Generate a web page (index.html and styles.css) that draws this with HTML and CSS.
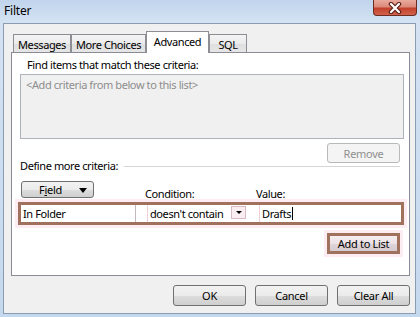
FILE: index.html
```html
<!DOCTYPE html>
<html lang="en">
<head>
    <meta charset="utf-8" />
    <title>Filter</title>
    <link rel="stylesheet" href="styles.css">
</head>
<body>
<div class="window">
    <div class="titlebar">
        <span class="title">Filter</span>
        <div class="close">
            <svg width="16" height="12" viewBox="0 0 16 12">
                <path d="M4 2 L12 10 M12 2 L4 10" stroke="#5b2119" stroke-width="4.5" stroke-linecap="round"/>
                <path d="M4 2 L12 10 M12 2 L4 10" stroke="#fff" stroke-width="2.2" stroke-linecap="round"/>
            </svg>
        </div>
    </div>

    <div class="client">
        <div class="tabs">
            <div class="tab tab-messages">Messages</div>
            <div class="tab tab-more">More Choices</div>
            <div class="tab tab-advanced active">Advanced</div>
            <div class="tab tab-sql">SQL</div>
        </div>

        <div class="panel">
            <div class="label">Find items that match these criteria:</div>
            <div class="criteria-list">&lt;Add criteria from below to this list&gt;</div>

            <div class="remove-row">
                <button class="btn btn-disabled">Remove</button>
            </div>

            <div class="section">
                <span>Define more criteria:</span>
                <span class="rule"></span>
            </div>

            <div class="headers">
                <button class="btn btn-field">F<span class="key">i</span>eld <span class="arrow"></span></button>
                <span class="cond-label">Condition:</span>
                <span class="value-label">Value:</span>
            </div>

            <!-- highlighted criteria row -->
            <div class="criteria-row">
                <div class="field-box">In Folder</div>
                <div class="cond-box">
                    <span class="cond-text">doesn't contain</span>
                    <span class="drop"><span class="drop-arrow"></span></span>
                </div>
                <div class="value-box">Drafts<span class="caret"></span></div>
            </div>

            <div class="add-row">
                <button class="btn btn-add">Add to List</button>
            </div>
        </div>

        <div class="footer">
            <button class="btn btn-footer">OK</button>
            <button class="btn btn-footer">Cancel</button>
            <button class="btn btn-footer">Clear All</button>
        </div>
    </div>
</div>
</body>
</html>
```

FILE: styles.css
```css
/* Window: aero-ish light blue frame */
body {
    margin: 0;
    width: 420px;
    height: 317px;
    overflow: hidden;
    font-family: "Noto Sans", "Liberation Sans", sans-serif;
    font-size: 11px;
    letter-spacing: -0.4px;
    color: #000;
}
.window {
    height: 317px;
    box-sizing: border-box;
    padding: 0 4px 3px 3px;
    display: flex;
    flex-direction: column;
    background: linear-gradient(180deg, #c0d4ec 0, #d4e2f3 22px, #c4d8ee 100%);
}
.titlebar {
    height: 23px;
    display: flex;
    justify-content: space-between;
    align-items: flex-start;
}
.title {
    padding: 2px 0 0 1px;
    font-size: 12px;
    letter-spacing: -0.2px;
}
.close {
    width: 44px;
    height: 16px;
    margin-right: -1px;
    box-sizing: border-box;
    border: 1px solid #6e2b22;
    border-top: none;
    border-radius: 0 0 4px 4px;
    background: linear-gradient(180deg, #e9aa9e 0, #dc8a7a 45%, #c4402c 55%, #d0634c 100%);
    display: flex;
    align-items: center;
    justify-content: center;
}
/* Client area */
.client {
    flex: 1;
    background: #f0f0f0;
    border: 1px solid #8a9bb2;
    padding: 7px 5px 0 7px;
    display: flex;
    flex-direction: column;
}
/* Tabs */
.tabs {
    display: flex;
    align-items: flex-end;
    height: 22px;
    padding-left: 2px;
    margin-bottom: -1px;
    position: relative;
    z-index: 1;
}
.tab {
    height: 18px;
    margin-bottom: 1px;
    box-sizing: border-box;
    border: 1px solid #8c8e94;
    border-bottom: none;
    background: linear-gradient(180deg, #f4f4f4 0, #ebebeb 50%, #dedede 51%, #e6e6e6 100%);
    display: flex;
    align-items: center;
    justify-content: center;
    padding-top: 2px;
}
.tab-messages { width: 58px; }
.tab-more { width: 75px; }
.tab-advanced { width: 63px; }
.tab-sql { width: 38px; }
.tab.active {
    height: 22px;
    margin-bottom: 0;
    background: #fff;
    padding-top: 0;
    padding-bottom: 2px;
}
/* Tab page */
.panel {
    height: 224px;
    box-sizing: border-box;
    background: #fff;
    border: 1px solid #898c95;
    padding: 0 5px 0 8px;
    display: flex;
    flex-direction: column;
}
.label {
    margin-top: 4px;
    padding-left: 7px;
    line-height: 15px;
}
.criteria-list {
    margin-top: 2px;
    height: 65px;
    box-sizing: border-box;
    background: #f0f0f0;
    border: 1px solid #aeb3bb;
    padding: 2px 5px;
    line-height: 15px;
    color: #8d8d8d;
}
.remove-row, .add-row {
    display: flex;
    justify-content: flex-end;
    padding-right: 4px;
}
.remove-row { margin-top: 4px; }
/* Buttons */
.btn {
    font-family: inherit;
    font-size: 11px;
    letter-spacing: -0.3px;
    color: #000;
    width: 73px;
    height: 20px;
    padding: 0;
    box-sizing: border-box;
    border: 1px solid #707070;
    border-radius: 3px;
    background: linear-gradient(180deg, #f2f2f2 0, #ebebeb 50%, #dddddd 51%, #cfcfcf 100%);
}
.btn-disabled {
    color: #8f8f8f;
    border-color: #b9b9b9;
    background: #f4f4f4;
}
.section {
    margin-top: -4px;
    display: flex;
    align-items: center;
    line-height: 14px;
}
.rule {
    flex: 1;
    margin: 1px 4px 0 6px;
    border-top: 1px solid #d5d5d5;
}
.headers {
    margin-top: 8px;
    display: flex;
    align-items: flex-end;
    padding-left: 1px;
}
.btn-field {
    height: 17px;
    display: flex;
    align-items: center;
    justify-content: center;
    position: relative;
    padding-right: 14px;
}
.key { text-decoration: underline; }
.arrow {
    position: absolute;
    right: 6px;
    top: 6px;
    border-left: 4px solid transparent;
    border-right: 4px solid transparent;
    border-top: 5px solid #000;
}
.cond-label {
    width: 111px;
    margin-left: 51px;
    margin-bottom: -3px;
}
.value-label {
    margin-bottom: -3px;
}
/* Highlighted criteria row */
.criteria-row {
    margin: 4px 0 0 -2px;
    height: 23px;
    box-sizing: border-box;
    border: 3px solid #a0715c;
    box-shadow: 0 0 0 3px #fdecf1;
    background: #fff;
    display: flex;
    line-height: 17px;
}
.field-box {
    width: 112px;
    padding-left: 2px;
    border-right: 1px solid #c4b8bc;
}
.cond-box {
    width: 98px;
    margin-left: 11px;
    border-left: 1px solid #f0cdd7;
    display: flex;
    padding-left: 2px;
}
.cond-text { flex: 1; }
.drop {
    width: 15px;
    height: 13px;
    margin: 1px 2px 0 0;
    box-sizing: border-box;
    border: 1px solid #d9b9c3;
    background: #fbeef2;
    display: flex;
    align-items: center;
    justify-content: center;
}
.drop-arrow {
    border-left: 3px solid transparent;
    border-right: 3px solid transparent;
    border-top: 3px solid #000;
}
.value-box {
    flex: 1;
    margin-left: 11px;
    border-left: 1px solid #f0cdd7;
    padding-left: 2px;
    display: flex;
    align-items: center;
}
.caret {
    width: 1px;
    height: 13px;
    margin-left: 1px;
    background: #000;
}
.add-row { margin-top: 8px; }
.btn-add {
    height: 21px;
    border: 3px solid #a0715c;
    border-radius: 0;
    box-shadow: 0 0 0 3px #fdecf1;
    background: linear-gradient(180deg, #f6eef1 0, #ece2e6 50%, #dfd4d8 51%, #d6cbcf 100%);
}
/* Footer buttons */
.footer {
    margin-top: 9px;
    display: flex;
    justify-content: flex-end;
    gap: 9px;
}
.btn-footer { height: 21px; }
```
